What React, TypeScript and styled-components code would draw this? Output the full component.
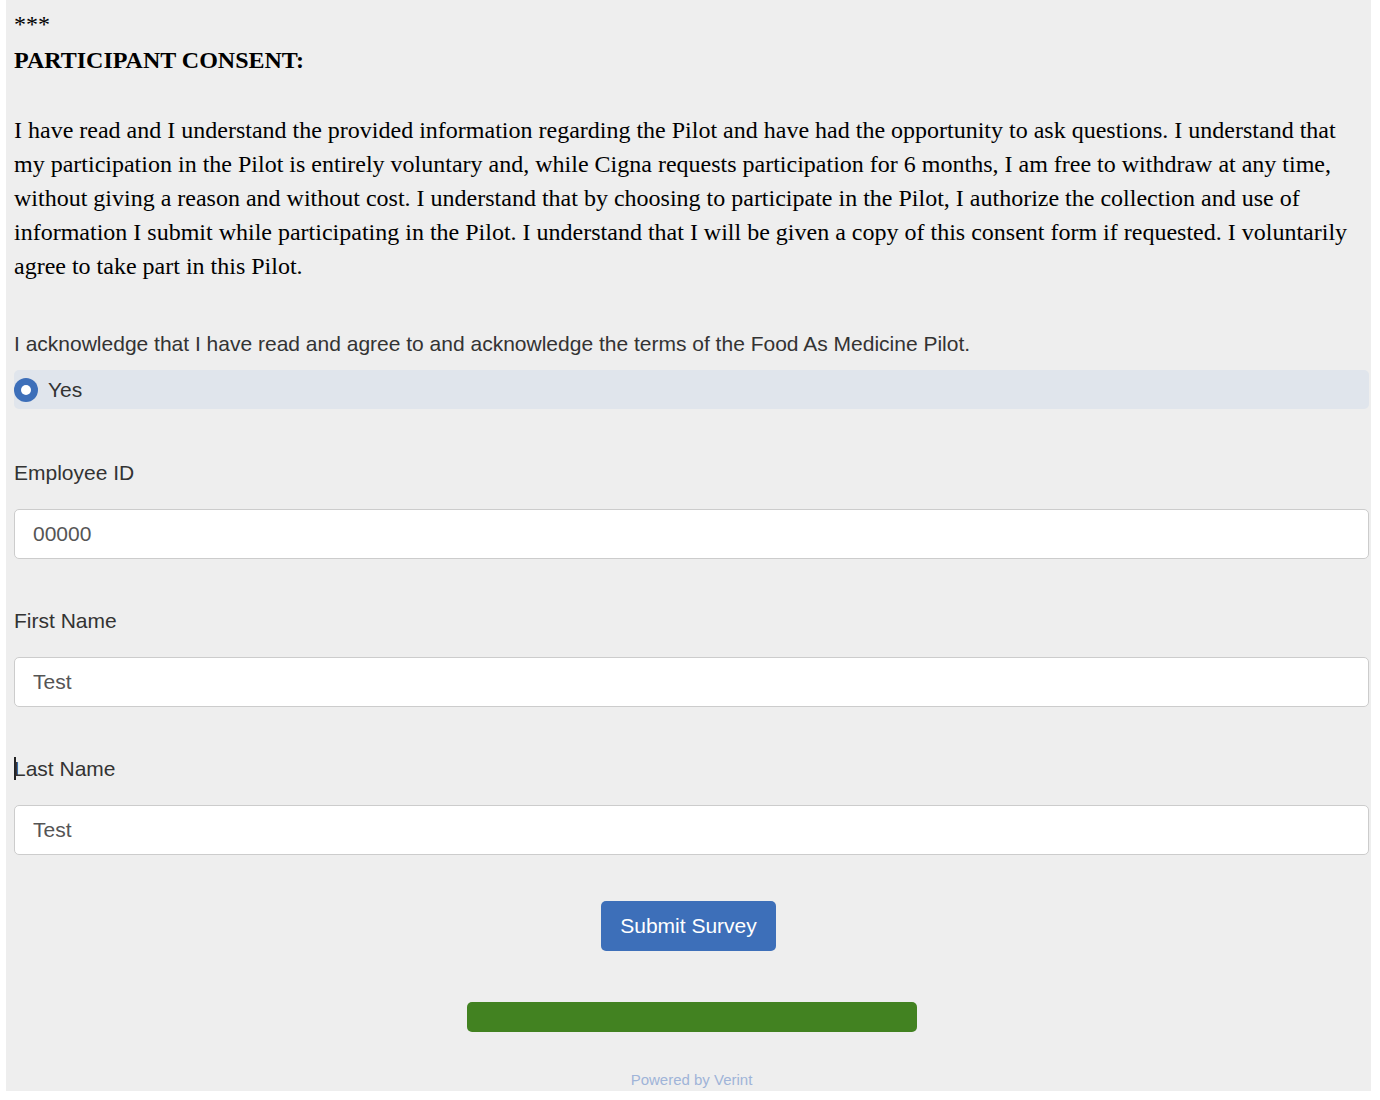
import React from "react";
import styled, { createGlobalStyle } from "styled-components";

const Global = createGlobalStyle`
  html, body { margin: 0; padding: 0; background: #ffffff; }
  * { box-sizing: border-box; }
`;

const Panel = styled.main`
  margin-left: 6px;
  width: 1365px;
  height: 1091px;
  background: #eeeeee;
  padding: 8px 2px 0 8px;
  display: flex;
  flex-direction: column;
`;

const SerifLine = styled.div`
  font-family: "Liberation Serif", "Times New Roman", serif;
  font-size: 24px;
  line-height: 32px;
  color: #000;
`;

const Heading = styled.div`
  font-family: "Liberation Serif", "Times New Roman", serif;
  font-size: 24px;
  font-weight: 700;
  line-height: 40px;
  color: #000;
`;

const Paragraph = styled.p`
  margin: 33px 0 0;
  padding-right: 15px;
  font-family: "Liberation Serif", "Times New Roman", serif;
  font-size: 24px;
  line-height: 34px;
  color: #000;
`;

const SansText = styled.div<{ $mt: number }>`
  margin-top: ${(p) => p.$mt}px;
  font-family: "Liberation Sans", Arial, sans-serif;
  font-size: 21px;
  line-height: 26px;
  color: #333333;
`;

const Caret = styled.span`
  display: inline-block;
  width: 2px;
  height: 23px;
  margin-right: -2px;
  vertical-align: -4px;
  background: #222222;
`;

const RadioRow = styled.label`
  margin-top: 13px;
  height: 39px;
  background: #e0e5ec;
  border-radius: 5px;
  display: flex;
  align-items: center;
  gap: 10px;
  font-family: "Liberation Sans", Arial, sans-serif;
  font-size: 21px;
  color: #333333;
`;

const RadioDot = styled.span`
  width: 24px;
  height: 24px;
  border-radius: 50%;
  background: #3d6fb9;
  display: flex;
  align-items: center;
  justify-content: center;
  &::after {
    content: "";
    width: 10px;
    height: 10px;
    border-radius: 50%;
    background: #ffffff;
  }
`;

const Input = styled.input`
  margin-top: 23px;
  width: 100%;
  height: 50px;
  border: 1px solid #cccccc;
  border-radius: 5px;
  background: #ffffff;
  padding: 0 18px;
  font-family: "Liberation Sans", Arial, sans-serif;
  font-size: 21px;
  color: #555555;
  outline: none;
`;

const Center = styled.div<{ $mt: number }>`
  margin-top: ${(p) => p.$mt}px;
  display: flex;
  justify-content: center;
`;

const SubmitButton = styled.button`
  width: 175px;
  height: 50px;
  border: none;
  border-radius: 5px;
  background: #3d6fb9;
  color: #ffffff;
  font-family: "Liberation Sans", Arial, sans-serif;
  font-size: 21px;
  cursor: pointer;
  margin-left: -6px;
`;

const ProgressBar = styled.div`
  width: 450px;
  height: 30px;
  border-radius: 5px;
  background: #428221;
`;

const Powered = styled.div`
  font-family: "Liberation Sans", Arial, sans-serif;
  font-size: 15px;
  color: #9fb4d8;
`;

export default function App() {
  return (
    <>
      <Global />
      <Panel>
        <SerifLine>***</SerifLine>
        <Heading>PARTICIPANT CONSENT:</Heading>
        <Paragraph>
          I have read and I understand the provided information regarding the Pilot and have had the opportunity to ask questions. I understand that my participation in the Pilot is entirely voluntary and, while Cigna requests participation for 6 months, I am free to withdraw at any time, without giving a reason and without cost. I understand that by choosing to participate in the Pilot, I authorize the collection and use of information I submit while participating in the Pilot. I understand that I will be given a copy of this consent form if requested. I voluntarily agree to take part in this Pilot.
        </Paragraph>
        <SansText $mt={48}>
          I acknowledge that I have read and agree to and acknowledge the terms of the Food As Medicine Pilot.
        </SansText>
        <RadioRow>
          <RadioDot />
          Yes
        </RadioRow>
        <SansText $mt={51}>Employee ID</SansText>
        <Input defaultValue="00000" />
        <SansText $mt={49}>First Name</SansText>
        <Input defaultValue="Test" />
        <SansText $mt={49}>
          <Caret />
          Last Name
        </SansText>
        <Input defaultValue="Test" />
        <Center $mt={46}>
          <SubmitButton>Submit Survey</SubmitButton>
        </Center>
        <Center $mt={51}>
          <ProgressBar />
        </Center>
        <Center $mt={39}>
          <Powered>Powered by Verint</Powered>
        </Center>
      </Panel>
    </>
  );
}
